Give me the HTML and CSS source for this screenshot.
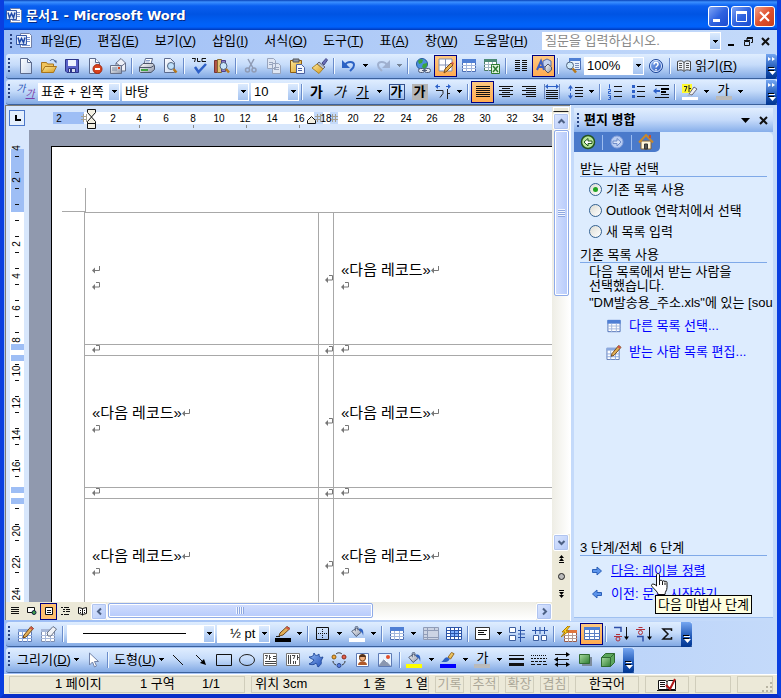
FILE: index.html
```html
<!DOCTYPE html>
<html lang="ko">
<head>
<meta charset="utf-8">
<title>문서1 - Microsoft Word</title>
<link rel="stylesheet" href="styles.css">
</head>
<body>
<svg class="sprite" aria-hidden="true">
  <defs>
    <linearGradient id="g-page" x1="0" y1="0" x2="1" y2="1"><stop offset="0" stop-color="#fff"/><stop offset="1" stop-color="#c3d3ee"/></linearGradient>
    <linearGradient id="g-gold" x1="0" y1="0" x2="1" y2="1"><stop offset="0" stop-color="#ffeb9c"/><stop offset="1" stop-color="#d69a21"/></linearGradient>
    <linearGradient id="g-blue" x1="0" y1="0" x2="1" y2="1"><stop offset="0" stop-color="#8fb8f5"/><stop offset="1" stop-color="#2350b8"/></linearGradient>
    <linearGradient id="g-green" x1="0" y1="0" x2="1" y2="1"><stop offset="0" stop-color="#a8dba0"/><stop offset="1" stop-color="#2f7d32"/></linearGradient>
    <linearGradient id="g-gray" x1="0" y1="0" x2="1" y2="1"><stop offset="0" stop-color="#fff"/><stop offset="1" stop-color="#8c95a8"/></linearGradient>
  </defs>
  <symbol id="dd" viewBox="0 0 5 3"><path d="M0 0h5v1h-1v1h-1v1h-1v-1h-1v-1h-1z"/></symbol>
  <symbol id="mark" viewBox="0 0 8 8"><path d="M7.500 0v4.500h-5" fill="none" stroke="#777"/><path d="M0 4.500l3-3v6z" fill="#777"/></symbol>
  <symbol id="cellmark" viewBox="0 0 8 8"><path d="M4 .5h3.500v4.500h-5" fill="none" stroke="#777"/><path d="M0 5l3-3v6z" fill="#777"/></symbol>
  <symbol id="word" viewBox="0 0 16 16"><path d="M4.500.5h9l2 2v12h-11z" fill="#fff" stroke="#6f7fa8"/><path d="M11 4.500h3M11 6.500h3M11 8.500h3M6 12.500h8" stroke="#7d96d0"/><path d="M.5 2.500h10v9h-10z" fill="url(#g-page)" stroke="#3558a8"/><path d="M2 4.500l1.500 5 2-4 2 4 1.500-5" fill="none" stroke="#1d48a8" stroke-width="1.500"/></symbol>
  <symbol id="new" viewBox="0 0 16 16"><path d="M2.500.5h7l4 4v11h-11z" fill="url(#g-page)" stroke="#5c6b8e"/><path d="M9.500.5v4h4z" fill="#fff" stroke="#5c6b8e"/></symbol>
  <symbol id="open" viewBox="0 0 16 16"><path d="M.5 14V4.500h5l1 1.500h6v3" fill="#f1c55c" stroke="#a8751c"/><path d="M.5 14.500L4 8.500h11.500l-3 6z" fill="url(#g-gold)" stroke="#a8751c"/><path d="M9 3c1-2 4-2 5 0" fill="none" stroke="#3e5b8c"/><path d="M12.500 2.500h3v3z" fill="#3e5b8c"/></symbol>
  <symbol id="save" viewBox="0 0 16 16"><path d="M1.500 1.500h13v13H3l-1.500-1.500z" fill="#5a63c8" stroke="#2c3588"/><path d="M4 2h8v6H4z" fill="#eef3ff"/><path d="M4.500 10.500h7v4h-7z" fill="#d7dcee" stroke="#2c3588"/><path d="M6 11h2v3H6z" fill="#2c3588"/></symbol>
  <symbol id="perm" viewBox="0 0 16 16"><path d="M2.500.5h6l4 4v11h-10z" fill="url(#g-page)" stroke="#5c6b8e"/><path d="M8.500.5v4h4" fill="#fff" stroke="#5c6b8e"/><circle cx="10.500" cy="11" r="4.500" fill="#d8421c" stroke="#a52a10"/><path d="M8 10h5v2H8z" fill="#fff"/></symbol>
  <symbol id="mail" viewBox="0 0 16 16"><path d="M6 5l5-4.500 4.500 4.500v8H6z" fill="#eef1f8" stroke="#66708a"/><path d="M6 5l5 3.500L15.500 5" fill="none" stroke="#66708a"/><path d="M.5 7.500h11v8H.5z" fill="url(#g-gray)" stroke="#66708a"/><path d="M2 10h5M2 12h5" stroke="#7b87a0"/><path d="M8 9h2v2H8z" fill="#d8421c"/></symbol>
  <symbol id="print" viewBox="0 0 16 16"><path d="M5 6l1.500-5.500h7L12 6z" fill="#fff" stroke="#5c6b8e"/><path d="M.5 9L4 5.500h10l1.500 2v4L12 14.500H1.500l-1-1z" fill="url(#g-gray)" stroke="#4d566b"/><path d="M1 9.500h11l3-2" fill="none" stroke="#4d566b"/><path d="M2 11h7v2H2z" fill="#42a544"/><path d="M7 2.500h4M6.500 4h4" stroke="#8da3cf"/></symbol>
  <symbol id="preview" viewBox="0 0 16 16"><path d="M2.500.5h6l4 4v10h-10z" fill="url(#g-page)" stroke="#5c6b8e"/><circle cx="9" cy="8" r="3.500" fill="#bfe0fa" stroke="#51657f"/><path d="M11.500 11l3 3.500" stroke="#b8791c" stroke-width="2.500"/></symbol>
  <symbol id="spell" viewBox="0 0 16 16"><path d="M1 .5h3.500L3.500 4M6.500 0v3.500H9.500M15 .5h-4v3h4" fill="none" stroke="#111"/><path d="M4 9l3.500 5L15 6" fill="none" stroke="#2d60c8" stroke-width="2.500"/></symbol>
  <symbol id="research" viewBox="0 0 16 16"><path d="M.5 2.500h3v12h-3z" fill="#b05548" stroke="#733"/><path d="M3.500 1.500h4v13h-4z" fill="#e2c27a" stroke="#86682c"/><path d="M7.500 2.500h4v11h-4z" fill="#8c7bc8" stroke="#4c4288"/><circle cx="9.500" cy="8" r="3.500" fill="#c9e5fa" stroke="#51657f"/><path d="M12 11l3 3.500" stroke="#b8791c" stroke-width="2.500"/></symbol>
  <symbol id="cut" viewBox="0 0 16 16"><path d="M5 1l5 9M11 1L6 10" stroke="#8f9bb5" stroke-width="1.500"/><circle cx="4.500" cy="12" r="2" fill="none" stroke="#8f9bb5" stroke-width="1.500"/><circle cx="11" cy="12" r="2" fill="none" stroke="#8f9bb5" stroke-width="1.500"/></symbol>
  <symbol id="copy" viewBox="0 0 16 16"><path d="M1.500.5h6l2 2v8h-8zM6.500 5.500h6l2 2v8h-8z" fill="#dfe6f3" stroke="#98a4bd"/><path d="M3 4.500h4M3 6.500h3M8 9.500h5M8 11.500h5" stroke="#98a4bd"/></symbol>
  <symbol id="paste" viewBox="0 0 16 16"><path d="M1.500 2.500h11v12h-11z" fill="url(#g-gold)" stroke="#8d5d13"/><path d="M4 1h6v3H4z" fill="#8e98ad" stroke="#555"/><path d="M7.500 6.500h5l3 3v6h-8z" fill="#f4f8ff" stroke="#4a60a0"/><path d="M9 10.500h4M9 12.500h4" stroke="#4a60a0"/></symbol>
  <symbol id="painter" viewBox="0 0 16 16"><path d="M10 5l4-4.500 1.500 1.500L12 7z" fill="#6a6fb8" stroke="#444988"/><path d="M7 4l6 5-2 2-6-5z" fill="#b8c0d0" stroke="#667"/><path d="M5 6l6 5-4 4.500L0 10z" fill="url(#g-gold)" stroke="#a8842c"/></symbol>
  <symbol id="undo" viewBox="0 0 16 16"><path d="M4 7c2-4 9-4 9 0 0 3-2 4-4 6" fill="none" stroke="#2c62c4" stroke-width="2"/><path d="M1 2v8h8z" fill="#2c62c4"/></symbol>
  <symbol id="redo" viewBox="0 0 16 16"><path d="M12 7c-2-4-9-4-9 0 0 3 2 4 4 6" fill="none" stroke="#9fb0cf" stroke-width="2"/><path d="M15 2v8H7z" fill="#9fb0cf"/></symbol>
  <symbol id="link" viewBox="0 0 16 16"><circle cx="7" cy="6" r="5.500" fill="#4a8fdd" stroke="#245a9c"/><path d="M3 3c2-2 4-2 5-1l-1 3-3 1zM8 6l4-1v3l-3 3-2-2z" fill="#3ba53c"/><rect x="3.500" y="10.500" width="6" height="4" rx="2" fill="#e2e7f0" stroke="#4c5a78"/><rect x="9.500" y="10.500" width="6" height="4" rx="2" fill="#e2e7f0" stroke="#4c5a78"/><path d="M7 12.500h5" stroke="#4c5a78"/></symbol>
  <symbol id="tborders" viewBox="0 0 16 16"><path d="M1 1h13v12H1z" fill="#fff" stroke="#8291b4"/><path d="M7.500 1v12M1 7h13" stroke="#8291b4"/><path d="M6 15l1-4 6-6 2 2-6 6z" fill="#e8b04a" stroke="#7d4b18"/><path d="M13 5l1.500-1.500 1.500 2L15 7z" fill="#d8604c"/></symbol>
  <symbol id="table" viewBox="0 0 16 16"><path d="M1.500 1.500h13v12h-13z" fill="#fff" stroke="#4b6eb5"/><path d="M1 1h14v4H1z" fill="#4f7fd4"/><path d="M1 7.500h14M1 10.500h14M5.500 5v9M10.500 5v9" stroke="#a3b7dc"/></symbol>
  <symbol id="excel" viewBox="0 0 16 16"><path d="M.5 1.500h12v11H.5z" fill="#fff" stroke="#4b7a65"/><path d="M0 1h13v3H0z" fill="#4b8a75"/><path d="M0 6.500h13M0 9.500h13M4.500 4v9M8.500 4v9" stroke="#a3b7c4"/><path d="M7.500 6.500h8v9h-8z" fill="#e3f4e0" stroke="#2d7a30"/><path d="M9 8l5 6M14 8l-5 6" stroke="#2d7a30" stroke-width="1.500"/></symbol>
  <symbol id="columns" viewBox="0 0 16 16"><path d="M2 2.500h5M2 4.500h5M2 6.500h5M2 8.500h5M2 10.500h5M2 12.500h5M9 2.500h5M9 4.500h5M9 6.500h5M9 8.500h5M9 10.500h5M9 12.500h5" stroke="#111"/></symbol>
  <symbol id="draw" viewBox="0 0 16 16"><path d="M7 3l4-2 4 2v5l-4 2-4-2z" fill="#c5d3ef" stroke="#5a6ea5"/><path d="M9 9l3-3 3.500 3v3L12 15l-3-3z" fill="url(#g-gray)" stroke="#556"/><path d="M1 12l4-9 3 9M2.500 9h5" fill="none" stroke="#3f5fc0" stroke-width="2"/></symbol>
  <symbol id="docmap" viewBox="0 0 16 16"><path d="M4.500.5h11v11h-11z" fill="#eaf2ff" stroke="#4b6eb5"/><path d="M4 0h12v3H4z" fill="#4f7fd4"/><path d="M10 5.500h4M10 7.500h4M10 9.500h4" stroke="#7b90bd"/><circle cx="5" cy="7.500" r="3.500" fill="#d2ebfb" stroke="#51657f"/><path d="M7.500 10.500l3.500 4" stroke="#b8791c" stroke-width="2.500"/></symbol>
  <symbol id="help" viewBox="0 0 16 16"><circle cx="8" cy="8" r="6.500" fill="url(#g-blue)" stroke="#1f4596"/><circle cx="8" cy="8" r="5.500" fill="none" stroke="#dbe8ff"/><path d="M6 6.500c0-3 4-3 4 0 0 1.500-2 1.500-2 3M8 11v1.500" fill="none" stroke="#fff" stroke-width="1.500"/></symbol>
  <symbol id="read" viewBox="0 0 16 16"><path d="M1.500 3.500c3-1 5-1 6.500 1 1.500-2 3.500-2 6.500-1v9c-3-1-5-1-6.500 1-1.500-2-3.500-2-6.500-1z" fill="#eef3fb" stroke="#444"/><path d="M8 4v9M3 5.500h3M3 7.500h3M3 9.500h3M10 5.500h3M10 7.500h3M10 9.500h3" stroke="#555"/></symbol>
  <symbol id="justify" viewBox="0 0 16 16"><path d="M1 2.500h14M1 4.500h14M1 6.500h14M1 8.500h14M1 10.500h14M1 12.500h14" stroke="#111"/></symbol>
  <symbol id="center" viewBox="0 0 16 16"><path d="M1 2.500h14M4 4.500h8M1 6.500h14M4 8.500h8M1 10.500h14M4 12.500h8" stroke="#111"/></symbol>
  <symbol id="right" viewBox="0 0 16 16"><path d="M1 2.500h14M5 4.500h10M1 6.500h14M5 8.500h10M1 10.500h14M5 12.500h10" stroke="#111"/></symbol>
  <symbol id="dist" viewBox="0 0 16 16"><path d="M2 6.500h12M2 8.500h12M2 10.500h12M2 12.500h12M2 14.500h12" stroke="#111"/><path d="M.5 0v15M15.500 0v15" stroke="#6b86bd"/><path d="M2 2.500h12" stroke="#2d60c8"/><path d="M1 2.500L4 0v5zM15 2.500L12 0v5z" fill="#2d60c8"/></symbol>
  <symbol id="spacing" viewBox="0 0 16 16"><path d="M8 3.500h8M8 6.500h8M8 9.500h8M8 12.500h8" stroke="#111"/><path d="M3.500 3v10" stroke="#2d60c8" stroke-dasharray="4 2"/><path d="M1 4.500L3.500 1 6 4.500zM1 11.500L3.500 15 6 11.500z" fill="#2d60c8"/></symbol>
  <symbol id="numbered" viewBox="0 0 16 16"><path d="M7 2.500h8M7 7.500h8M7 12.500h8" stroke="#111"/><path d="M2 .5h.5v4M1 5.500h2.500v2H1.500v2H4M1 11.500h2.500v4H1M2 13.500h1.500" fill="none" stroke="#2d60c8"/></symbol>
  <symbol id="bulleted" viewBox="0 0 16 16"><path d="M7 2.500h8M7 7.500h8M7 12.500h8" stroke="#111"/><path d="M2 1h3v3H2zM2 6h3v3H2zM2 11h3v3H2z" fill="#2d60c8"/></symbol>
  <symbol id="outdent" viewBox="0 0 16 16"><path d="M2 1.500h14M8 4.500h8M8 7.500h5M8 10.500h8M2 13.500h14" stroke="#111"/><path d="M8 4h8v2H8zM8 7h5v2H8z"/><path d="M3 7h4" stroke="#2d60c8" stroke-width="2"/><path d="M0 7l3.500-3v6z" fill="#2d60c8"/></symbol>
  <symbol id="highlight" viewBox="0 0 16 16"><path d="M0 0h10v9H0z" fill="#fffb30"/><path d="M2 2.500h3l-2 5M7 1v7M7 4.500h2" fill="none" stroke="#222"/><path d="M7 10l5-7 3 2-5 6z" fill="#f2f2f2" stroke="#667"/><path d="M5 12l2-2 3 1z" fill="#aaa"/><path d="M0 13h16v3H0z" fill="#fff"/></symbol>
  <symbol id="tpencil" viewBox="0 0 16 16"><path d="M.5 3.500h13v12H.5z" fill="#fff" stroke="#5d7ab5"/><path d="M0 3h14v3H0z" fill="#8ba9de"/><path d="M0 9.500h14M0 12.500h14M4.500 6v10M9.500 6v10" stroke="#8ba9de"/><path d="M5 12l1-3 7-8.500 2.500 2L8 11z" fill="#e3b056" stroke="#6e4619"/><path d="M13 .5l2.500 2-1.500 1.500-2.500-2z" fill="#cf5548"/></symbol>
  <symbol id="teraser" viewBox="0 0 16 16"><path d="M.5 3.500h13v12H.5z" fill="#fff" stroke="#7d8eb1"/><path d="M0 3h14v3H0z" fill="#a8b8d8"/><path d="M0 9.500h14M0 12.500h14M4.500 6v10M9.500 6v10" stroke="#a8b8d8"/><path d="M6 7l6-6.500 3.500 2.500L10 10H7z" fill="#f0f2f6" stroke="#667085"/></symbol>
  <symbol id="pencolor" viewBox="0 0 16 16"><path d="M4 10l1-3 7-6.500 3 2L8 9z" fill="#e3b056" stroke="#6e4619"/><path d="M12 .5l3 2-1.500 1.500-3-2z" fill="#cf5548"/><path d="M1 10.500h4" stroke="#222"/><path d="M0 12h16v4H0z"/></symbol>
  <symbol id="border" viewBox="0 0 16 16"><path d="M1.500 1.500h12v12h-12z" fill="none" stroke="#111"/><path d="M7.500 3v9M3 7.500h9" stroke="#111" stroke-dasharray="1 1"/></symbol>
  <symbol id="bucket" viewBox="0 0 16 16"><path d="M2 6l6-4 5 5-6 5z" fill="url(#g-gray)" stroke="#44506b"/><path d="M6 6V1.500c0-1.500 3-1.500 3 0V5" fill="none" stroke="#44506b"/><path d="M10 3c4-1 6 2 5 8-1-4-2-5-4-5z" fill="#2f62c0"/></symbol>
  <symbol id="merge" viewBox="0 0 16 16"><path d="M.5 1.500h15v12H.5z" fill="#ccd4e4" stroke="#909db8"/><path d="M0 4.500h16M4.500 1v13M11.500 1v3M0 8.500h4M0 11.500h16" stroke="#909db8"/></symbol>
  <symbol id="split" viewBox="0 0 16 16"><path d="M.5 1.500h15v12H.5z" fill="#fff" stroke="#2b54a8"/><path d="M4 5h9v6H4z" fill="#7fb0ff"/><path d="M0 4.500h16M0 7.500h16M0 10.500h16M4.500 1v13M8.500 1v13M12.500 1v13" stroke="#2b54a8"/></symbol>
  <symbol id="aligntl" viewBox="0 0 16 16"><path d="M.5 1.500h14v12H.5z" fill="#fff" stroke="#333"/><path d="M3 4.500h9M3 6.500h6M3 8.500h8" stroke="#111"/></symbol>
  <symbol id="distrows" viewBox="0 0 16 16"><path d="M.5 1.500h6v5h-6zM.5 9.500h6v5h-6z" fill="#fff" stroke="#3d5f9f"/><path d="M9 4.500h7M9 8h7M9 11.500h7M11.500 0v16" stroke="#2b54a8"/></symbol>
  <symbol id="distcols" viewBox="0 0 16 16"><path d="M1.500 9.500h5v5h-5zM9.500 9.500h5v5h-5z" fill="#fff" stroke="#3d5f9f"/><path d="M0 4.500h16M3.500 1v7M8 1v7M12.500 1v7" stroke="#2b54a8"/></symbol>
  <symbol id="autofmt" viewBox="0 0 16 16"><path d="M3.500 4.500h12v11h-12z" fill="#fff" stroke="#9a5a48"/><path d="M3 4h13v3H3z" fill="#e0743c"/><path d="M3 9.500h13M3 12.500h13M7.500 7v9M11.500 7v9" stroke="#b59a94"/><path d="M7 0L1 6h3L0 11l8-6H5l4-5z" fill="#ffd21c" stroke="#a97a08"/></symbol>
  <symbol id="gridlines" viewBox="0 0 16 16"><path d="M.5 1.500h15v12H.5z" fill="#fff" stroke="#4b6eb5"/><path d="M0 1h16v3H0z" fill="#4f7fd4"/><path d="M0 7.500h16M0 10.500h16M5.500 4v10M10.500 4v10" stroke="#5b7fc4"/></symbol>
  <symbol id="sortasc" viewBox="0 0 16 16"><path d="M1 1.500h7V6" fill="none" stroke="#2d4ea8" stroke-width="1.500"/><path d="M3 8.500h4M1 10.500h8" stroke="#b0303a"/><circle cx="5" cy="13" r="2" fill="none" stroke="#b0303a"/><path d="M13.500 1v12" stroke="#111"/><path d="M11 10.500h5L13.500 14z"/></symbol>
  <symbol id="sortdesc" viewBox="0 0 16 16"><path d="M2.500 1.500h4M0 3.500h9" stroke="#b0303a"/><circle cx="4.500" cy="6.500" r="2" fill="none" stroke="#b0303a"/><path d="M1 10.500h6v5" fill="none" stroke="#2d4ea8" stroke-width="1.500"/><path d="M13.500 1v12" stroke="#111"/><path d="M11 10.500h5L13.500 14z"/></symbol>
  <symbol id="sum" viewBox="0 0 16 16"><path d="M12.500 5V3H4l5 5-5 5h8.500v-2" fill="none" stroke="#111" stroke-width="1.500"/></symbol>
  <symbol id="pointer" viewBox="0 0 16 16"><path d="M4.500 1v12l3-3 2 5 2-1-2-4.500h4z" fill="#fff" stroke="#7283a8"/></symbol>
  <symbol id="line" viewBox="0 0 16 16"><path d="M3 3l10 10" stroke="#111"/></symbol>
  <symbol id="arrow" viewBox="0 0 16 16"><path d="M3 3l8 8" stroke="#111"/><path d="M13 13l-6-2 4-4z"/></symbol>
  <symbol id="rect" viewBox="0 0 16 16"><path d="M.5 2.500h15v11H.5z" fill="none" stroke="#111"/></symbol>
  <symbol id="oval" viewBox="0 0 16 16"><ellipse cx="8" cy="8" rx="7.500" ry="5.500" fill="none" stroke="#222"/></symbol>
  <symbol id="textbox" viewBox="0 0 16 16"><path d="M1.500 1.500h13v12h-13z" fill="#fff" stroke="#777"/><path d="M3 3.500h2.500L4 7M7.500 3v5M8 5.500h1M11 4.500h3M11 6.500h3M3 9.500h11M3 11.500h11" fill="none" stroke="#444"/></symbol>
  <symbol id="vtextbox" viewBox="0 0 16 16"><path d="M1.500 1.500h13v12h-13z" fill="#fff" stroke="#777"/><path d="M3.500 3v9M5.500 3v9M8.500 9v3M10.500 9v3M7 3.500h3L8.500 7M12.500 3v5M13 5.500h1" fill="none" stroke="#444"/></symbol>
  <symbol id="wordart" viewBox="0 0 16 16"><path d="M6 1c1 3 3 3 5 1 0 3 1 4 4 3l-2 4c1 2 0 4-3 6-1-2-1-3-2-4-2 2-4 2-7 1 2-1 4-2 5-4C4 7 2 6 1 5c3 0 5-1 5-4z" fill="url(#g-blue)" stroke="#234b9c"/></symbol>
  <symbol id="diagram" viewBox="0 0 16 16"><circle cx="3" cy="5" r="2" fill="#f3a83c" stroke="#875a10"/><circle cx="13" cy="5" r="2" fill="#e2604c" stroke="#8a2a1c"/><circle cx="8" cy="13.500" r="2" fill="#5b7fe0" stroke="#2a468a"/><path d="M5 2c2-2 5-1 6 0M2 9c0 2 1 3 3 4M14 9c0 2-1 3-3 4" fill="none" stroke="#333"/></symbol>
  <symbol id="clip" viewBox="0 0 16 16"><path d="M2.500 1.500h12v13h-12z" fill="#fff" stroke="#5d7ab5"/><circle cx="8.500" cy="6" r="3" fill="#f0b080" stroke="#733c14"/><path d="M4 13c0-5 9-5 9 0z" fill="#b05a2a"/><path d="M5 5c0-4 7-4 7 0z" fill="#543018"/></symbol>
  <symbol id="picture" viewBox="0 0 16 16"><path d="M1.500 1.500h13v13h-13z" fill="#e9f3ff" stroke="#5d7ab5"/><path d="M2 13l5-6 7 7H2z" fill="#8a97b0"/><path d="M7 7l3 3" stroke="#fff"/><circle cx="11" cy="5" r="2" fill="#e2502c"/></symbol>
  <symbol id="brush" viewBox="0 0 16 16"><path d="M8 6l4-5.500 3 1.500-4 6z" fill="url(#g-gold)" stroke="#8d5d13"/><path d="M0 11c3 0 3-5 7-5l3 2c-2 4-6 4-10 3z" fill="#2f62c0"/></symbol>
  <symbol id="lstyle" viewBox="0 0 16 16"><path d="M1 3.500h15" stroke="#111"/><path d="M1 7h15" stroke="#111" stroke-width="2"/><path d="M1 12.500h15" stroke="#111" stroke-width="3"/></symbol>
  <symbol id="dash" viewBox="0 0 16 16"><path d="M0 3.500h16" stroke="#111" stroke-dasharray="1 1"/><path d="M0 6.500h16" stroke="#111" stroke-dasharray="2 1"/><path d="M0 9.500h16" stroke="#111" stroke-dasharray="3 1"/><path d="M0 12.500h16" stroke="#111" stroke-dasharray="4 2"/></symbol>
  <symbol id="astyle" viewBox="0 0 16 16"><path d="M1 2.500h12M3 7.500h12M3 12.500h11" stroke="#111"/><path d="M12 0l4 2.500-4 2.500zM4 5v5L0 7.500zM4 10v5l-3.500-2.500zM12 10v5l4-2.500z"/></symbol>
  <symbol id="shadow" viewBox="0 0 16 16"><path d="M5 5h10v9H5z" fill="#7b8a9a"/><path d="M2.500 2.500h10v9h-10z" fill="url(#g-green)" stroke="#2f6b32"/></symbol>
  <symbol id="cube" viewBox="0 0 16 16"><path d="M1.500 5.500l4-4h9v9l-4 4h-9z" fill="#5ca65c" stroke="#2f6b32"/><path d="M1.500 5.500h9v9h-9z" fill="url(#g-green)" stroke="#2f6b32"/><path d="M10.500 5.500l4-4" stroke="#2f6b32"/></symbol>
  <symbol id="vnormal" viewBox="0 0 12 12"><path d="M2 2.500h8M2 4.500h8M2 6.500h8M2 8.500h8" stroke="#111"/></symbol>
  <symbol id="vweb" viewBox="0 0 12 12"><path d="M1.500 2.500h7v5h-7z" fill="#fff" stroke="#111"/><circle cx="8" cy="7.500" r="2" fill="#3fa24a" stroke="#124"/></symbol>
  <symbol id="vprint" viewBox="0 0 12 12"><path d="M2.500 2.500h7v7h-7z" fill="#fff" stroke="#111"/><path d="M4 5.500h4M4 7.500h4" stroke="#111"/></symbol>
  <symbol id="voutline" viewBox="0 0 12 12"><path d="M1 2.500h2M4 2.500h5M3 4.500h2M6 4.500h4M3 6.500h2M6 6.500h4M1 9.500h2M4 9.500h5" stroke="#111"/></symbol>
  <symbol id="vread" viewBox="0 0 12 12"><path d="M1.500 2.500l4 1 4-1v6l-4 1-4-1zM5.500 3.500v7" fill="#fff" stroke="#111"/><path d="M3 5.500h1M7 5.500h1M3 7.500h1M7 7.500h1" stroke="#111"/></symbol>
  <symbol id="chev" viewBox="0 0 9 9"><path d="M1.500 6l3-3 3 3" fill="none" stroke="#4d6185" stroke-width="2"/></symbol>
  <symbol id="more" viewBox="0 0 9 12"><path d="M1 2l3 2-3 2zM5 2l3 2-3 2z" fill="#fff"/></symbol>
  <symbol id="opts" viewBox="0 0 9 9"><path d="M2 1.500h6" stroke="#fff"/><path d="M2 4h7L5.500 8z" fill="#fff"/><path d="M1 0h6v1H1zM1 3h6v1H1z"/></symbol>
  <symbol id="back" viewBox="0 0 16 16"><circle cx="8" cy="8" r="6.500" fill="#b9e79c" stroke="#24551c" stroke-width="1.500"/><path d="M4 8l4-3.500V7h4v2.500H8V12z" fill="#fff" stroke="#24551c"/></symbol>
  <symbol id="fwd" viewBox="0 0 16 16"><circle cx="8" cy="8" r="6" fill="#b9cdf2" stroke="#8ba4dc"/><path d="M12 8L8 4.500V7H4v2.500h4V12z" fill="#d9e4f8" stroke="#6f8cc9"/></symbol>
  <symbol id="home" viewBox="0 0 16 16"><path d="M3 7h10v8H3z" fill="#fff6dc" stroke="#8a6430"/><path d="M1 8.500L8 1l7 7.500" fill="none" stroke="#c8882c" stroke-width="2"/><path d="M6.500 10h3v5h-3z" fill="#555" stroke="#333"/><path d="M11 1h2v3h-2z" fill="#c8502c"/></symbol>
  <symbol id="goright" viewBox="0 0 10 10"><path d="M.5 3.500H5V1l4.500 4L5 9V6.500H.5z" fill="#5a93ea" stroke="#2b5fb8"/></symbol>
  <symbol id="goleft" viewBox="0 0 10 10"><path d="M9.500 3.500H5V1L.5 5 5 9V6.500h4.500z" fill="#5a93ea" stroke="#2b5fb8"/></symbol>
  <symbol id="proof" viewBox="0 0 20 14"><path d="M1.500 2.500h7l1.500 1 1.500-1h7v9h-17z" fill="#fff" stroke="#111"/><path d="M10 3v10M0 12.500h19M3 4.500h5M3 6.500h5M3 8.500h5" stroke="#111"/><path d="M9 7l4 4 5-10" fill="none" stroke="#b01818" stroke-width="2"/></symbol>
</svg>

<div class="window">
  <header class="titlebar">
    <svg class="i16"><use href="#word"/></svg>
    <h1>문서1 - Microsoft Word</h1>
    <button class="cap" aria-label="최소화"><svg viewBox="0 0 19 19"><path d="M4 12h7v3H4z" fill="#fff"/></svg></button>
    <button class="cap" aria-label="최대화"><svg viewBox="0 0 19 19"><path d="M4.500 5.500h10v9h-10z" fill="none" stroke="#fff"/><path d="M4 4h11v3H4z" fill="#fff"/></svg></button>
    <button class="cap close" aria-label="닫기"><svg viewBox="0 0 19 19"><path d="M5 5l9 9M14 5l-9 9" stroke="#fff" stroke-width="2"/></svg></button>
  </header>

  <nav class="menubar">
    <i class="grip"></i>
    <svg class="i16 doc"><use href="#word"/></svg>
    <button>파일(<u>F</u>)</button><button>편집(<u>E</u>)</button><button>보기(<u>V</u>)</button><button>삽입(<u>I</u>)</button><button>서식(<u>O</u>)</button><button>도구(<u>T</u>)</button><button>표(<u>A</u>)</button><button>창(<u>W</u>)</button><button>도움말(<u>H</u>)</button>
    <span class="combo ask"><input type="text" placeholder="질문을 입력하십시오." aria-label="질문"><i class="drop"><svg><use href="#dd"/></svg></i></span>
    <button class="mdi" aria-label="문서 최소화"><svg viewBox="0 0 9 9"><path d="M1 7h6v2H1z"/></svg></button>
    <button class="mdi" aria-label="문서 복원"><svg viewBox="0 0 9 9"><path d="M3 1.500h5.500v4H7M.5 4.500h5v4h-5zM3 0.500h6M0 3.500h6M3 1v2" fill="none" stroke="#111"/></svg></button>
    <button class="mdi" aria-label="문서 닫기"><svg viewBox="0 0 9 9"><path d="M1 1l7 7M8 1L1 8" stroke="#111" stroke-width="2"/></svg></button>
  </nav>

  <div class="toolbar" role="toolbar" aria-label="표준">
    <i class="grip"></i>
    <button class="tb" aria-label="새 문서"><svg><use href="#new"/></svg></button>
    <button class="tb" aria-label="열기"><svg><use href="#open"/></svg></button>
    <button class="tb" aria-label="저장"><svg><use href="#save"/></svg></button>
    <button class="tb" aria-label="권한"><svg><use href="#perm"/></svg></button>
    <button class="tb" aria-label="전자 메일"><svg><use href="#mail"/></svg></button>
    <i class="sep"></i>
    <button class="tb" aria-label="인쇄"><svg><use href="#print"/></svg></button>
    <button class="tb" aria-label="미리 보기"><svg><use href="#preview"/></svg></button>
    <i class="sep"></i>
    <button class="tb" aria-label="맞춤법"><svg><use href="#spell"/></svg></button>
    <button class="tb" aria-label="리서치"><svg><use href="#research"/></svg></button>
    <i class="sep"></i>
    <button class="tb" aria-label="잘라내기"><svg><use href="#cut"/></svg></button>
    <button class="tb" aria-label="복사"><svg><use href="#copy"/></svg></button>
    <button class="tb" aria-label="붙여넣기"><svg><use href="#paste"/></svg></button>
    <button class="tb" aria-label="서식 복사"><svg><use href="#painter"/></svg></button>
    <i class="sep"></i>
    <button class="tb" aria-label="실행 취소"><svg><use href="#undo"/></svg></button>
    <button class="dd" aria-label="취소 목록"><svg><use href="#dd"/></svg></button>
    <button class="tb" aria-label="다시 실행"><svg><use href="#redo"/></svg></button>
    <button class="dd off" aria-label="다시 실행 목록"><svg><use href="#dd"/></svg></button>
    <i class="sep"></i>
    <button class="tb" aria-label="하이퍼링크"><svg><use href="#link"/></svg></button>
    <button class="tb on" aria-label="표 및 테두리"><svg><use href="#tborders"/></svg></button>
    <button class="tb" aria-label="표 삽입"><svg><use href="#table"/></svg></button>
    <button class="tb" aria-label="워크시트 삽입"><svg><use href="#excel"/></svg></button>
    <i class="sep"></i>
    <button class="tb" aria-label="단"><svg><use href="#columns"/></svg></button>
    <button class="tb on" aria-label="그리기"><svg><use href="#draw"/></svg></button>
    <i class="sep"></i>
    <button class="tb" aria-label="문서 구조"><svg><use href="#docmap"/></svg></button>
    <span class="combo zoom"><select aria-label="확대/축소"><option>100%</option></select><i class="drop"><svg><use href="#dd"/></svg></i></span>
    <button class="tb" aria-label="도움말"><svg><use href="#help"/></svg></button>
    <i class="sep"></i>
    <button class="tb text"><svg><use href="#read"/></svg><span>읽기(<u>R</u>)</span></button>
    <button class="end far" aria-label="도구 모음 옵션"><svg class="mo"><use href="#more"/></svg><svg class="op"><use href="#opts"/></svg></button>
  </div>

  <div class="toolbar last-bar" role="toolbar" aria-label="서식">
    <i class="grip"></i>
    <button class="tb" aria-label="스타일 및 서식"><span class="styles"><b>가</b><b>가</b></span></button>
    <span class="combo style"><select aria-label="스타일"><option>표준 + 왼쪽</option></select><i class="drop"><svg><use href="#dd"/></svg></i></span>
    <span class="combo font"><select aria-label="글꼴"><option>바탕</option></select><i class="drop"><svg><use href="#dd"/></svg></i></span>
    <span class="combo size"><select aria-label="글꼴 크기"><option>10</option></select><i class="drop"><svg><use href="#dd"/></svg></i></span>
    <i class="sep"></i>
    <button class="tb ga bold">가</button>
    <button class="tb ga ital">가</button>
    <button class="tb ga"><u>가</u></button>
    <button class="dd" aria-label="밑줄 종류"><svg><use href="#dd"/></svg></button>
    <button class="tb ga bold"><span class="boxed">가</span></button>
    <button class="tb ga bold"><span class="boxed shaded">가</span></button>
    <button class="tb ga" aria-label="문자 장평"><svg viewBox="0 0 16 16"><path d="M1 2.500h4M11 2.500h4" stroke="#2d60c8"/><path d="M0 2.500L3 0v5zM16 2.500L13 0v5z" fill="#2d60c8"/><path d="M1 6.500h7v3l-3 4M12.500 5v10M13 9.500h2" fill="none" stroke="#222"/></svg></button>
    <button class="dd" aria-label="장평 목록"><svg><use href="#dd"/></svg></button>
    <i class="sep"></i>
    <button class="tb on" aria-label="양쪽 맞춤"><svg><use href="#justify"/></svg></button>
    <button class="tb" aria-label="가운데 맞춤"><svg><use href="#center"/></svg></button>
    <button class="tb" aria-label="오른쪽 맞춤"><svg><use href="#right"/></svg></button>
    <button class="tb" aria-label="균등 분할"><svg><use href="#dist"/></svg></button>
    <button class="tb" aria-label="줄 간격"><svg><use href="#spacing"/></svg></button>
    <button class="dd" aria-label="줄 간격 목록"><svg><use href="#dd"/></svg></button>
    <i class="sep"></i>
    <button class="tb" aria-label="번호 매기기"><svg><use href="#numbered"/></svg></button>
    <button class="tb" aria-label="글머리 기호"><svg><use href="#bulleted"/></svg></button>
    <button class="tb" aria-label="내어쓰기"><svg><use href="#outdent"/></svg></button>
    <i class="sep"></i>
    <button class="tb" aria-label="강조"><svg><use href="#highlight"/></svg></button>
    <button class="dd" aria-label="강조 색"><svg><use href="#dd"/></svg></button>
    <button class="tb ga"><span class="swatch gray">가</span></button>
    <button class="dd" aria-label="글꼴 색"><svg><use href="#dd"/></svg></button>
    <button class="end far" aria-label="도구 모음 옵션"><svg class="mo"><use href="#more"/></svg><svg class="op"><use href="#opts"/></svg></button>
  </div>

  <main class="work">
    <section class="doc-area">
      <div class="tabsel"><button aria-label="왼쪽 탭"><svg viewBox="0 0 13 13"><path d="M4 3h2v4h4v2H4z"/></svg></button></div>
      <svg class="hruler">
        <defs><pattern id="mesh" width="3" height="3" patternUnits="userSpaceOnUse"><path d="M0 .5h3M.5 0v3" stroke="#a49f90"/></pattern></defs>
        <rect x="24" y="5" width="1200" height="12" fill="#fff"/><rect x="24" y="5" width="31" height="12" fill="#9ebef5"/>
        <rect x="285" y="5" width="9" height="12" fill="#c4dafa"/><rect x="301" y="5" width="8" height="12" fill="#c4dafa"/>
        <path d="M110.500 18v3M164.500 18v3M217.500 18v3M270.500 18v3" stroke="#888"/>
        <g text-anchor="middle"><text x="30" y="15">2</text><text x="84" y="15">2</text><text x="110" y="15">4</text><text x="137" y="15">6</text><text x="164" y="15">8</text><text x="190" y="15">10</text><text x="216" y="15">12</text><text x="243" y="15">14</text><text x="270" y="15">16</text><text x="297" y="15">18</text><text x="324" y="15">20</text><text x="350" y="15">22</text><text x="377" y="15">24</text><text x="403" y="15">26</text><text x="430" y="15">28</text><text x="456" y="15">30</text><text x="483" y="15">32</text><text x="509" y="15">34</text></g>
        <path d="M52 7h6v8h-6zM286 7h6v8h-6zM302 7h7v8h-7z" fill="url(#mesh)"/>
        <path d="M58.500 2.500h8v3l-4 4.500-4-4.500zM58.500 16.500v-2l4-4.500 4 4.500v2zM58.500 16.500h8v5h-8z" fill="#f2efe2" stroke="#111"/>
        <path d="M278.500 16.500v-3l4-4 4 4v3z" fill="#f2efe2" stroke="#111"/>
      </svg>
      <svg class="vruler">
        <rect x="4" y="19" width="14" height="1000" fill="#fff"/>
        <path d="M5 19h13v63H5zM5 214h13v6H5zM5 225h13v6H5zM5 357h13v6H5zM5 368h13v6H5z" fill="#9ebef5"/>
        <path d="M9 26.500h4M9 42.500h4M9 58.500h4M9 74.500h4M9 90.500h4M9 106.500h4M9 122.500h4M9 138.500h4M9 154.500h4M9 170.500h4M9 186.500h4M9 202.500h4M9 234.500h4M9 250.500h4M9 266.500h4M9 282.500h4M9 298.500h4M9 314.500h4M9 330.500h4M9 346.500h4M9 378.500h4M9 394.500h4M9 410.500h4M9 426.500h4M9 442.500h4M9 458.500h4" stroke="#111"/>
        <g text-anchor="middle"><text transform="translate(14 18) rotate(-90)">4</text><text transform="translate(14 50) rotate(-90)">2</text><text transform="translate(14 114) rotate(-90)">2</text><text transform="translate(14 146) rotate(-90)">4</text><text transform="translate(14 178) rotate(-90)">6</text><text transform="translate(14 210) rotate(-90)">8</text><text transform="translate(14 241) rotate(-90)">10</text><text transform="translate(14 273) rotate(-90)">12</text><text transform="translate(14 305) rotate(-90)">14</text><text transform="translate(14 337) rotate(-90)">16</text><text transform="translate(14 401) rotate(-90)">20</text><text transform="translate(14 433) rotate(-90)">22</text><text transform="translate(14 465) rotate(-90)">24</text></g>
      </svg>
      <div class="canvas">
        <div class="page">
          <div class="corner"></div>
          <table class="labels">
            <colgroup><col class="c1"><col class="c2"><col></colgroup>
            <tr class="label"><td><p><svg><use href="#mark"/></svg></p><p><svg><use href="#cellmark"/></svg></p></td><td class="gut"><svg><use href="#cellmark"/></svg></td><td><p>«다음 레코드»<svg><use href="#mark"/></svg></p><p><svg><use href="#cellmark"/></svg></p></td></tr>
            <tr class="space"><td><svg><use href="#cellmark"/></svg></td><td class="gut"><svg><use href="#cellmark"/></svg></td><td><svg><use href="#cellmark"/></svg></td></tr>
            <tr class="label"><td><p>«다음 레코드»<svg><use href="#mark"/></svg></p><p><svg><use href="#cellmark"/></svg></p></td><td class="gut"><svg><use href="#cellmark"/></svg></td><td><p>«다음 레코드»<svg><use href="#mark"/></svg></p><p><svg><use href="#cellmark"/></svg></p></td></tr>
            <tr class="space"><td><svg><use href="#cellmark"/></svg></td><td class="gut"><svg><use href="#cellmark"/></svg></td><td><svg><use href="#cellmark"/></svg></td></tr>
            <tr class="label"><td><p>«다음 레코드»<svg><use href="#mark"/></svg></p><p><svg><use href="#cellmark"/></svg></p></td><td class="gut"><svg><use href="#cellmark"/></svg></td><td><p>«다음 레코드»<svg><use href="#mark"/></svg></p><p><svg><use href="#cellmark"/></svg></p></td></tr>
          </table>
        </div>
      </div>
      <div class="vscroll">
        <i class="splitter"></i>
        <button class="sb" aria-label="위로"><svg><use href="#chev"/></svg></button>
        <div class="vtrack"><div class="vthumb"><i></i></div></div>
        <button class="sb down" aria-label="아래로"><svg><use href="#chev"/></svg></button>
        <button class="nav" aria-label="이전 페이지"><svg viewBox="0 0 9 9"><path d="M4.500 0L7 3H2zM4.500 3L7 6H2zM2 7h5v1H2z"/></svg></button>
        <button class="nav" aria-label="개체 선택"><svg viewBox="0 0 9 9"><circle cx="4.500" cy="4.500" r="3" fill="#bbb" stroke="#222"/></svg></button>
        <button class="nav" aria-label="다음 페이지"><svg viewBox="0 0 9 9"><path d="M4.500 9L7 6H2zM4.500 6L7 3H2zM2 1h5v1H2z"/></svg></button>
      </div>
      <div class="hscroll">
        <button class="view" aria-label="기본"><svg><use href="#vnormal"/></svg></button>
        <button class="view" aria-label="웹 모양"><svg><use href="#vweb"/></svg></button>
        <button class="view on" aria-label="인쇄 모양"><svg><use href="#vprint"/></svg></button>
        <button class="view" aria-label="개요"><svg><use href="#voutline"/></svg></button>
        <button class="view" aria-label="읽기"><svg><use href="#vread"/></svg></button>
        <button class="sb left" aria-label="왼쪽으로"><svg><use href="#chev"/></svg></button>
        <div class="htrack"><div class="hthumb"><i></i></div></div>
        <button class="sb rightw" aria-label="오른쪽으로"><svg><use href="#chev"/></svg></button>
      </div>
    </section>

    <aside class="pane">
      <header class="pane-head"><i class="grip"></i><h2>편지 병합</h2>
        <button aria-label="다른 작업 창"><svg class="tri" viewBox="0 0 9 5"><path d="M0 0h9L4.500 5z"/></svg></button>
        <button aria-label="창 닫기"><svg viewBox="0 0 9 9"><path d="M1 1l7 7M8 1L1 8" stroke="#111" stroke-width="2"/></svg></button>
      </header>
      <div class="pane-tools">
        <div class="navset">
          <button aria-label="뒤로"><svg><use href="#back"/></svg></button><i></i>
          <button aria-label="앞으로"><svg><use href="#fwd"/></svg></button><i></i>
          <button aria-label="홈"><svg><use href="#home"/></svg></button>
        </div>
      </div>
      <div class="pane-body">
        <h3>받는 사람 선택</h3>
        <div class="radios">
          <label><input type="radio" name="src" checked>기존 목록 사용</label>
          <label><input type="radio" name="src">Outlook 연락처에서 선택</label>
          <label><input type="radio" name="src">새 목록 입력</label>
        </div>
        <h3>기존 목록 사용</h3>
        <p>다음 목록에서 받는 사람을<br>선택했습니다.</p>
        <p class="file">"DM발송용_주소.xls"에 있는 [sou</p>
        <a class="act" href="#"><svg class="i16"><use href="#table"/></svg>다른 목록 선택...</a>
        <a class="act" href="#"><svg class="i16"><use href="#tpencil"/></svg>받는 사람 목록 편집...</a>
        <h3 class="steps">3 단계/전체&nbsp; 6 단계</h3>
        <div class="step next"><svg><use href="#goright"/></svg><a href="#">다음: 레이블 정렬</a>
          <svg class="hand" viewBox="0 0 17 22"><path d="M5.500 13V2c0-2 3-2 3 0v6c0-1 3-1 3 .5 0-1 2.500-1 2.500.5 0-1 2-1 2 .5v5c0 3-2 4-2 7H7c0-3-5-6-6.500-9 0-2 3-2 5 .5z" fill="#fff" stroke="#111"/><path d="M8.500 8v4M11.500 8.500V12M14 9.500V12" stroke="#111"/></svg>
          <span class="tip" role="tooltip">다음 마법사 단계</span>
        </div>
        <div class="step"><svg><use href="#goleft"/></svg><a href="#">이전: 문서 시작하기</a></div>
      </div>
    </aside>
  </main>

  <div class="toolbar short" role="toolbar" aria-label="표 및 테두리">
    <i class="grip"></i>
    <button class="tb" aria-label="표 그리기"><svg><use href="#tpencil"/></svg></button>
    <button class="tb" aria-label="지우개"><svg><use href="#teraser"/></svg></button>
    <i class="sep"></i>
    <span class="combo lines"><select aria-label="선 스타일"><option></option></select><i class="drop"><svg><use href="#dd"/></svg></i></span>
    <span class="combo weight"><select aria-label="선 두께"><option>½ pt</option></select><i class="drop"><svg><use href="#dd"/></svg></i></span>
    <button class="tb" aria-label="테두리 색"><svg><use href="#pencolor"/></svg></button>
    <button class="dd" aria-label="테두리 색 목록"><svg><use href="#dd"/></svg></button>
    <i class="sep"></i>
    <button class="tb" aria-label="테두리"><svg><use href="#border"/></svg></button>
    <button class="dd" aria-label="테두리 목록"><svg><use href="#dd"/></svg></button>
    <button class="tb" aria-label="음영 색"><span class="swatch white"><svg><use href="#bucket"/></svg></span></button>
    <button class="dd" aria-label="음영 색 목록"><svg><use href="#dd"/></svg></button>
    <i class="sep"></i>
    <button class="tb" aria-label="표 삽입"><svg><use href="#table"/></svg></button>
    <button class="dd" aria-label="삽입 목록"><svg><use href="#dd"/></svg></button>
    <button class="tb" aria-label="셀 병합"><svg><use href="#merge"/></svg></button>
    <button class="tb" aria-label="셀 분할"><svg><use href="#split"/></svg></button>
    <i class="sep"></i>
    <button class="tb" aria-label="왼쪽 위 맞춤"><svg><use href="#aligntl"/></svg></button>
    <button class="dd" aria-label="맞춤 목록"><svg><use href="#dd"/></svg></button>
    <button class="tb" aria-label="행 높이를 같게"><svg><use href="#distrows"/></svg></button>
    <button class="tb" aria-label="열 너비를 같게"><svg><use href="#distcols"/></svg></button>
    <i class="sep"></i>
    <button class="tb" aria-label="표 자동 서식"><svg><use href="#autofmt"/></svg></button>
    <button class="tb on" aria-label="눈금선"><svg><use href="#gridlines"/></svg></button>
    <i class="sep"></i>
    <button class="tb" aria-label="오름차순"><svg><use href="#sortasc"/></svg></button>
    <button class="tb" aria-label="내림차순"><svg><use href="#sortdesc"/></svg></button>
    <button class="tb" aria-label="자동 합계"><svg><use href="#sum"/></svg></button>
    <button class="end" aria-label="도구 모음 옵션"><svg class="op"><use href="#opts"/></svg></button>
  </div>

  <div class="toolbar short" role="toolbar" aria-label="그리기">
    <i class="grip"></i>
    <button class="tb text"><span>그리기(<u>D</u>)</span><svg class="tiny"><use href="#dd"/></svg></button>
    <button class="tb" aria-label="개체 선택"><svg><use href="#pointer"/></svg></button>
    <i class="sep"></i>
    <button class="tb text"><span>도형(<u>U</u>)</span><svg class="tiny"><use href="#dd"/></svg></button>
    <button class="tb" aria-label="선"><svg><use href="#line"/></svg></button>
    <button class="tb" aria-label="화살표"><svg><use href="#arrow"/></svg></button>
    <button class="tb" aria-label="직사각형"><svg><use href="#rect"/></svg></button>
    <button class="tb" aria-label="타원"><svg><use href="#oval"/></svg></button>
    <button class="tb" aria-label="텍스트 상자"><svg><use href="#textbox"/></svg></button>
    <button class="tb" aria-label="세로 텍스트 상자"><svg><use href="#vtextbox"/></svg></button>
    <button class="tb" aria-label="WordArt"><svg><use href="#wordart"/></svg></button>
    <button class="tb" aria-label="다이어그램"><svg><use href="#diagram"/></svg></button>
    <button class="tb" aria-label="클립 아트"><svg><use href="#clip"/></svg></button>
    <button class="tb" aria-label="그림"><svg><use href="#picture"/></svg></button>
    <i class="sep"></i>
    <button class="tb" aria-label="채우기 색"><span class="swatch yellow"><svg><use href="#bucket"/></svg></span></button>
    <button class="dd" aria-label="채우기 목록"><svg><use href="#dd"/></svg></button>
    <button class="tb" aria-label="선 색"><span class="swatch blue"><svg><use href="#brush"/></svg></span></button>
    <button class="dd" aria-label="선 색 목록"><svg><use href="#dd"/></svg></button>
    <button class="tb ga"><span class="swatch gray">가</span></button>
    <button class="dd" aria-label="글꼴 색"><svg><use href="#dd"/></svg></button>
    <button class="tb" aria-label="선 스타일"><svg><use href="#lstyle"/></svg></button>
    <button class="tb" aria-label="대시 스타일"><svg><use href="#dash"/></svg></button>
    <button class="tb" aria-label="화살표 스타일"><svg><use href="#astyle"/></svg></button>
    <button class="tb" aria-label="그림자"><svg><use href="#shadow"/></svg></button>
    <button class="tb" aria-label="3차원"><svg><use href="#cube"/></svg></button>
    <button class="end" aria-label="도구 모음 옵션"><svg class="op"><use href="#opts"/></svg></button>
  </div>

  <footer class="status">
    <div class="cell where"><span>1 페이지</span><span>1 구역</span><span>1/1</span></div>
    <div class="cell pos"><span>위치 3cm</span><span>1 줄</span><span>1 열</span></div>
    <div class="cell mode">기록</div><div class="cell mode">추적</div><div class="cell mode">확장</div><div class="cell mode">겹침</div>
    <div class="cell lang">한국어</div>
    <div class="cell proof"><svg><use href="#proof"/></svg></div>
    <div class="cell blank"></div>
    <div class="cell blank"></div>
    <svg class="resize" viewBox="0 0 12 12"><path d="M9 1h2v2H9zM9 5h2v2H9zM9 9h2v2H9zM5 5h2v2H5zM5 9h2v2H5zM1 9h2v2H1z" fill="#b8b4a2"/></svg>
  </footer>
</div>
</body>
</html>
```
FILE: styles.css
```css
* { box-sizing: border-box; }
body { margin: 0; font: 13px/16px "Liberation Sans", "Noto Sans CJK KR", sans-serif; color: #000; }
button, input, select { font: inherit; color: inherit; margin: 0; padding: 0; border: 0; background: none; border-radius: 0; }
button { display: flex; align-items: center; justify-content: center; flex: none; white-space: nowrap; }
h1, h2, h3, p { margin: 0; font-size: 13px; font-weight: normal; }
svg { display: block; flex: none; }
.sprite { position: absolute; width: 0; height: 0; }
.i16 { width: 16px; height: 16px; }

.window {
  height: 100vh; min-height: 480px; display: flex; flex-direction: column; overflow: hidden;
  background: linear-gradient(90deg, #9ebef5, #c4dafa);
  border: solid #0a3fe0; border-width: 0 4px 4px; border-bottom-color: #0a2fc8;
}

.titlebar {
  height: 30px; margin: 0 -4px; padding: 2px 6px 0 6px; display: flex; align-items: center; gap: 2px; flex: none;
  background: linear-gradient(#0842b8, #3c90ff 2px, #0a5ff0 6px, #0054e3 14px, #0062f8 24px, #0060fa 27px, #0038b8);
}
.titlebar h1 { flex: 1; padding-left: 2px; color: #fff; font: bold 13px/20px "DejaVu Sans", "Noto Sans CJK KR", sans-serif; text-shadow: 1px 1px #0a2a80; }
.cap { width: 21px; height: 21px; border: 1px solid #fff; border-radius: 3px; background: linear-gradient(135deg, #7fa4f5, #2f63e0 50%, #1b4bd0); }
.cap svg { width: 19px; height: 19px; }
.cap.close { background: linear-gradient(135deg, #f0a088, #e0502c 50%, #c8401c); }

.grip { flex: none; width: 2px; height: 15px; margin: 0 1px 0 0; background: repeating-linear-gradient(#27417f 0 2px, transparent 2px 4px); }

.menubar { height: 24px; flex: none; display: flex; align-items: center; padding: 0 3px 2px 6px; }
.menubar > button { padding: 0 8px; height: 20px; }
.menubar .doc { margin: 0 0 0 2px; width: 18px; height: 16px; }
.menubar > .mdi { width: 17px; padding: 0; }
.mdi svg { width: 9px; height: 9px; }
.ask { width: 179px; margin: 0 1px 0 auto; height: 18px; }
.ask input::placeholder { color: #888; opacity: 1; }

.toolbar {
  height: 25px; margin: 0 0 1px 2px; padding: 0 0 1px 2px; flex: none; display: flex; align-items: center;
  background: linear-gradient(#dfedff, #c6dcfa 45%, #82a9e4); border-bottom: 1px solid #3b619c; border-radius: 3px 0 0 3px;
}
.toolbar.last-bar { margin-bottom: 0; }
.toolbar .grip { margin-right: 4px; }
.toolbar.short { align-self: flex-start; }
.tb { width: 23px; height: 22px; }
.tb svg { width: 16px; height: 16px; }
.tb.on { background: linear-gradient(#ffc880, #ffab50); border: 1px solid #000080; }
.tb.text { width: auto; padding: 0 3px; gap: 3px; }
.tb.text .tiny { width: 5px; height: 3px; }
.dd { width: 11px; height: 22px; }
.dd svg, .drop svg { width: 5px; height: 3px; }
.dd.off { opacity: .4; }
.sep { flex: none; width: 6px; height: 16px; background: linear-gradient(90deg, transparent 2px, #6a8ccb 2px 3px, #f1f9ff 3px 4px, transparent 4px); }
.ga { font-size: 14px; line-height: 14px; }
.bold { font-weight: bold; }
.ital { font-style: italic; }
.boxed { border: 1px solid #33508c; width: 16px; height: 16px; display: flex; align-items: center; justify-content: center; font-size: 13px; line-height: 14px; }
.shaded { background: #b5b5b5; border-color: #b5b5b5; }
.swatch { width: 16px; height: 16px; border-bottom: 4px solid; display: flex; justify-content: center; line-height: 12px; font-size: 13px; }
.swatch svg { width: 16px; height: 14px; }
.swatch.white { border-color: #fff; }
.swatch.yellow { border-color: #ff0; }
.swatch.blue { border-color: #00f; }
.swatch.gray { border-color: #bbb; }
.styles { display: flex; font-size: 10px; line-height: 10px; color: #2c56b8; }
.styles b { font-weight: normal; font-style: italic; }
.styles b + b { color: #7a3fa8; margin: 5px 0 0; text-decoration: underline; }

.combo { display: flex; flex: none; height: 18px; background: #fff; margin-right: 2px; }
.combo select, .combo input { flex: 1; min-width: 0; appearance: none; outline: 0; padding: 0 0 0 3px; line-height: 16px; }
.drop { flex: none; width: 12px; border: 1px solid #fff; background: linear-gradient(#dcebfe, #a4c3f0); display: flex; align-items: center; justify-content: center; }
.combo.zoom { width: 60px; margin: 0; }
.combo.style { width: 82px; margin-left: 1px; }
.combo.font { width: 127px; }
.combo.size { width: 48px; margin: 0; }
.combo.lines { width: 148px; margin-left: 1px; }
.combo.lines select { background: linear-gradient(#000, #000) center / 76% 1px no-repeat; }
.combo.weight { width: 53px; margin-right: 1px; }
.combo.weight select { padding-left: 13px; }

.end { width: 11px; height: 25px; margin: 0 0 -1px 3px; flex-direction: column; justify-content: space-between; padding: 1px 0 3px; background: linear-gradient(#75a6f1, #1d55b4 60%, #003591); border-radius: 0 3px 3px 0; }
.end.far { margin-left: auto; }
.end .mo { width: 9px; height: 12px; }
.end .op { width: 9px; height: 9px; margin-top: auto; }

.work { flex: 1; min-height: 0; display: grid; grid-template-columns: minmax(0, 1fr) 207px; }
.doc-area {
  min-height: 0; display: grid; grid-template-columns: 23px minmax(0, 1fr) 18px; grid-template-rows: 23px minmax(0, 1fr) 18px;
  border: solid #7f7c73; border-width: 1px 0 0 1px; padding: 1px 0 0; background: #d8e7fc; margin: 0 0 1px 1px;
}
.tabsel { padding: 3px 0 0 3px; }
.tabsel button { width: 16px; height: 16px; border: 1px solid #4b77c8; background: #e4effd; }
.tabsel svg { width: 13px; height: 13px; }
.hruler { width: 100%; height: 23px; font-size: 10px; overflow: hidden; }
.vruler { width: 23px; height: 100%; font-size: 10px; overflow: hidden; grid-area: 2 / 1; }
.canvas { grid-area: 2 / 2; overflow: hidden; background: #9099ae; padding: 16px 0 0 22px; }
.page { background: #fff; border: solid #000; border-width: 1px 0 0 1px; padding: 41px 0 0 10px; min-height: 100%; }
.corner { width: 24px; height: 24px; border: solid #a8a8a8; border-width: 0 1px 1px 0; }
.labels { margin-left: 22px; width: calc(100% - 22px); table-layout: fixed; border-collapse: collapse; font-size: 15px; line-height: 16px; }
.labels .c1 { width: 234px; }
.labels .c2 { width: 15px; }
.labels td { padding: 0 0 2px 7px; border: 1px solid #a8a8a8; vertical-align: middle; }
.labels td:last-child { border-right: 0; }
.labels p { display: flex; align-items: center; height: 16px; font-size: 15px; white-space: nowrap; }
.labels svg { width: 8px; height: 8px; }
.labels td.gut { padding: 0 0 0 6px; }
.label { height: 132px; }
.space { height: 11px; }
.space td { line-height: 8px; }

.vscroll { grid-area: 1 / 3 / 3 / 4; display: flex; flex-direction: column; align-items: center; background: #ece9d8; }
.splitter { width: 16px; height: 5px; border: 1px solid #fff; border-bottom: 1px solid #222; background: #ece9d8; margin-bottom: 1px; flex: none; }
.sb { width: 16px; height: 17px; border: 1px solid #fff; border-radius: 2px; background: linear-gradient(135deg, #dbe6fe, #b4c9f8); box-shadow: inset 0 0 0 1px #b0c4f0; }
.sb svg { width: 9px; height: 9px; }
.down svg { transform: rotate(180deg); }
.left svg { transform: rotate(-90deg); }
.rightw svg { transform: rotate(90deg); }
.vtrack { flex: 1; width: 100%; background: linear-gradient(90deg, #eeede5, #fff); display: flex; flex-direction: column; align-items: center; }
.vthumb { width: 15px; height: 41%; border: 1px solid #8fabe8; border-radius: 2px; background: linear-gradient(90deg, #d2defe, #b7cbfb); display: flex; align-items: center; justify-content: center; box-shadow: 0 0 0 1px #fff inset; }
.vthumb i { width: 7px; height: 8px; background: repeating-linear-gradient(#f2f6ff 0 1px, #8fa8e0 1px 2px); }
.nav { width: 16px; height: 17px; }
.nav svg { width: 9px; height: 9px; }
.hscroll { grid-area: 3 / 1 / 4 / 4; display: flex; align-items: center; background: #ece9d8; padding-right: 18px; }
.view { width: 17px; height: 17px; }
.view svg { width: 12px; height: 12px; }
.view.on { background: #ffc070; border: 1px solid #000080; }
.htrack { flex: 1; height: 100%; padding: 1px; background: linear-gradient(#eeede5, #fff); }
.hthumb { width: 62%; height: 15px; border: 1px solid #8fabe8; border-radius: 2px; background: linear-gradient(#d2defe, #b7cbfb); display: flex; align-items: center; justify-content: center; box-shadow: 0 0 0 1px #fff inset; }
.hthumb i { width: 8px; height: 7px; background: repeating-linear-gradient(90deg, #f2f6ff 0 1px, #8fa8e0 1px 2px); }

.pane { display: flex; flex-direction: column; min-height: 0; padding: 3px 4px 3px 3px; background: #c4dafa; border-left: 1px solid #fff; }
.pane-head { height: 24px; flex: none; display: flex; align-items: center; gap: 4px; padding: 0 3px; background: linear-gradient(#e1eefe, #c5dafa 50%, #86aeea); }
.pane-head h2 { flex: 1; font-weight: bold; }
.pane-head svg { width: 9px; height: 9px; }
.pane-head button { width: 14px; height: 16px; }
.pane-head .tri { height: 5px; }
.pane-tools { flex: none; background: #ddecfe; border-radius: 0 5px 0 0; display: flex; }
.navset { height: 20px; display: flex; align-items: center; padding: 0 6px; background: #4a7acb; border-bottom-right-radius: 5px; }
.navset svg { width: 16px; height: 16px; }
.navset i { width: 1px; height: 15px; background: #9dbdf0; margin: 0 6px; }
.pane-body { flex: 1; min-height: 0; overflow: hidden; background: #ddecfe; display: flex; flex-direction: column; padding: 9px 0 12px 6px; position: relative; border-bottom: 1px solid #9fc0f0; }
.pane-body h3 { height: 16px; line-height: 16px; border-bottom: 1px solid #7fa9e8; margin-right: 6px; flex: none; }
.radios { padding: 2px 0 5px 9px; }
.radios label { display: flex; align-items: center; gap: 4px; height: 21px; }
.radios input { appearance: none; width: 13px; height: 13px; border: 1px solid #33608f; border-radius: 50%; background: linear-gradient(135deg, #dcdcd4, #fff); display: flex; align-items: center; justify-content: center; }
.radios input:checked::before { content: ""; width: 5px; height: 5px; border-radius: 50%; background: #22a522; }
.pane-body p { line-height: 14px; padding: 2px 0 0 9px; white-space: nowrap; }
.pane-body .file { padding-top: 3px; }
a { color: #00f; text-decoration: none; }
.act { display: flex; align-items: center; gap: 7px; height: 26px; padding-left: 26px; flex: none; }
.file + .act { margin-top: 3px; }
.act .i16 { height: 15px; }
.pane-body .steps { margin-top: auto; }
.step { display: flex; align-items: center; gap: 9px; padding-left: 12px; height: 23px; flex: none; position: relative; }
.steps + .step { margin-top: 3px; }
.step svg { width: 10px; height: 10px; }
.next a { text-decoration: underline; }
.next { z-index: 1; }
.step .hand { position: absolute; left: 71px; top: 14px; width: 17px; height: 22px; }
.tip { position: absolute; left: 75px; top: 36px; padding: 0 2px; line-height: 17px; background: #ffffe1; border: 1px solid #000; white-space: nowrap; }

.work + .toolbar { margin-top: 1px; }
.status { height: 20px; flex: none; display: flex; gap: 6px; padding: 1px 4px 1px 5px; background: #ece9d8; border-top: 1px solid #fff; line-height: 14px; }
.cell { border: 1px solid #d0cdbb; padding-bottom: 2px; display: flex; align-items: center; justify-content: center; white-space: nowrap; flex: none; }
.where { flex: 232 1 0; justify-content: flex-start; padding-left: 45px; }
.where span:nth-child(1) { width: 85px; }
.where span:nth-child(2) { width: 62px; }
.pos { flex: 184 1 0; justify-content: flex-start; padding-left: 3px; }
.pos span:nth-child(1) { width: 108px; }
.pos span:nth-child(2) { width: 42px; }
.mode { width: 29px; color: #aca899; }
.lang { width: 64px; }
.proof { width: 44px; padding: 0; }
.proof svg { width: 20px; height: 14px; }
.blank { width: 36px; }
.resize { width: 12px; height: 12px; align-self: flex-end; margin-left: -18px; }
```
